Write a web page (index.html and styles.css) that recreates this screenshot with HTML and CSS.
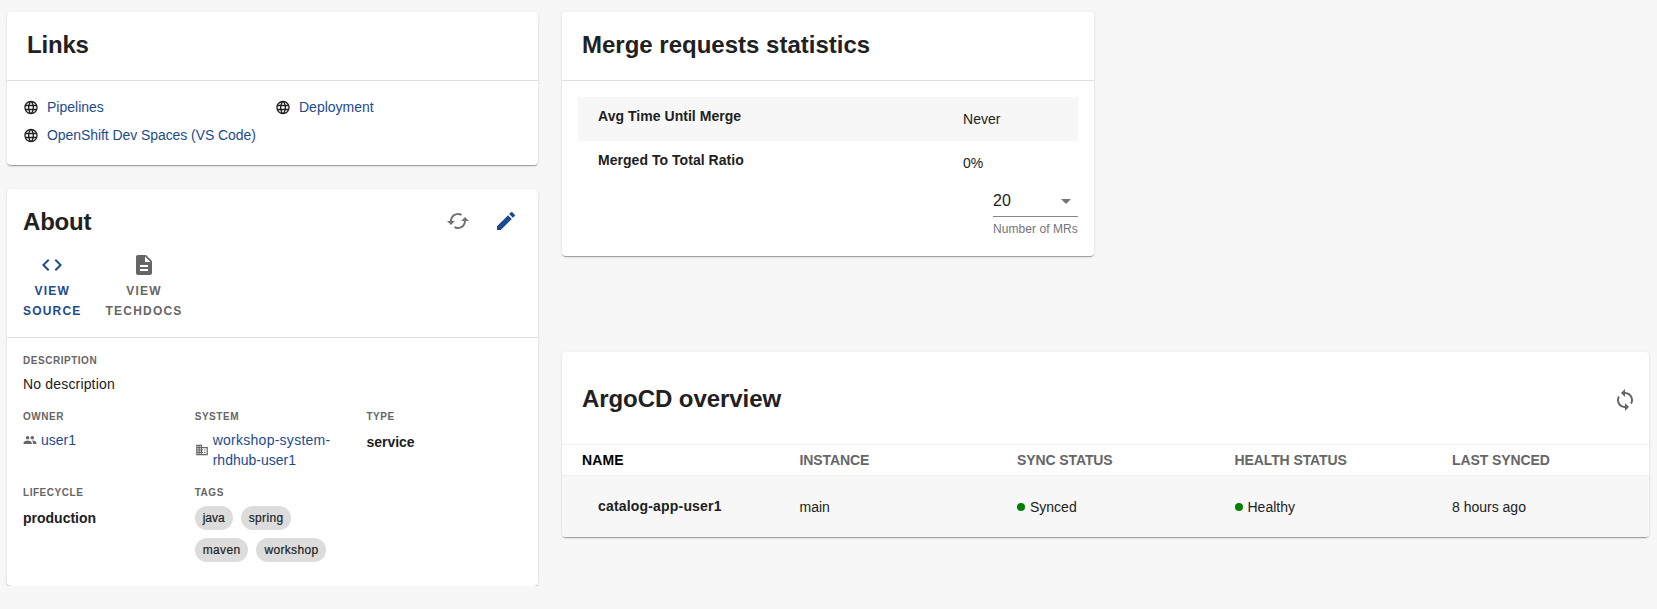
FILE: index.html
```html
<!DOCTYPE html>
<html lang="en">
<head>
<meta charset="utf-8">
<title>Catalog overview</title>
<link rel="stylesheet" href="styles.css">
</head>
<body>
<svg class="defs" aria-hidden="true">
  <symbol id="globe" viewBox="0 0 24 24"><path d="M11.99 2C6.47 2 2 6.48 2 12s4.47 10 9.99 10C17.52 22 22 17.52 22 12S17.52 2 11.99 2zm6.93 6h-2.95c-.32-1.25-.78-2.45-1.38-3.56 1.84.63 3.37 1.91 4.33 3.56zM12 4.04c.83 1.2 1.48 2.53 1.91 3.96h-3.82c.43-1.43 1.08-2.76 1.91-3.96zM4.26 14C4.1 13.36 4 12.69 4 12s.1-1.36.26-2h3.38c-.08.66-.14 1.32-.14 2s.06 1.34.14 2H4.26zm.82 2h2.95c.32 1.25.78 2.45 1.38 3.56-1.84-.63-3.37-1.9-4.33-3.56zm2.95-8H5.08c.96-1.66 2.49-2.93 4.33-3.56C8.81 5.55 8.35 6.75 8.03 8zM12 19.96c-.83-1.2-1.48-2.53-1.91-3.96h3.82c-.43 1.43-1.08 2.76-1.91 3.96zM14.34 14H9.66c-.09-.66-.16-1.32-.16-2s.07-1.35.16-2h4.68c.09.65.16 1.32.16 2s-.07 1.34-.16 2zm.25 5.56c.6-1.11 1.06-2.31 1.38-3.56h2.95c-.96 1.65-2.49 2.93-4.33 3.56zM16.36 14c.08-.66.14-1.32.14-2s-.06-1.34-.14-2h3.38c.16.64.26 1.31.26 2s-.1 1.36-.26 2h-3.38z"/></symbol>
</svg>
<main class="page">
  <div class="column-left">
    <section class="card links">
      <header class="card-head"><h2 class="snug">Links</h2></header>
      <div class="link-grid">
        <a class="link"><svg class="globe"><use href="#globe"/></svg>Pipelines</a>
        <a class="link"><svg class="globe"><use href="#globe"/></svg>Deployment</a>
        <a class="link long"><svg class="globe"><use href="#globe"/></svg>OpenShift Dev Spaces (VS Code)</a>
      </div>
    </section>

    <section class="card about">
      <header class="about-head">
        <div class="about-title">
          <h2 class="snug">About</h2>
          <div class="about-icons">
            <svg class="icon muted" viewBox="0 0 24 24"><path d="M19 8l-4 4h3c0 3.31-2.69 6-6 6-1.01 0-1.97-.25-2.8-.7l-1.46 1.46C8.97 19.54 10.43 20 12 20c4.42 0 8-3.58 8-8h3l-4-4zM6 12c0-3.31 2.69-6 6-6 1.01 0 1.97.25 2.8.7l1.46-1.46C15.03 4.46 13.57 4 12 4c-4.42 0-8 3.58-8 8H1l4 4 4-4H6z"/></svg>
            <svg class="icon blue" viewBox="0 0 24 24"><path d="M3 17.25V21h3.75L17.81 9.94l-3.75-3.75L3 17.25zM20.71 7.04c.39-.39.39-1.02 0-1.41l-2.34-2.34a.9959.9959 0 0 0-1.41 0l-1.83 1.83 3.75 3.75 1.83-1.83z"/></svg>
          </div>
        </div>
        <nav class="actions">
          <a class="action blue"><svg class="icon" viewBox="0 0 24 24"><path d="M9.4 16.6L4.8 12l4.6-4.6L8 6l-6 6 6 6 1.4-1.4zm5.2 0l4.6-4.6-4.6-4.6L16 6l6 6-6 6-1.4-1.4z"/></svg><span>VIEW<br>SOURCE</span></a>
          <a class="action gray"><svg class="icon" viewBox="0 0 24 24"><path d="M14 2H6c-1.1 0-1.99.9-1.99 2L4 20c0 1.1.89 2 1.99 2H18c1.1 0 2-.9 2-2V8l-6-6zm2 16H8v-2h8v2zm0-4H8v-2h8v2zm-3-5V3.5L18.5 9H13z"/></svg><span>VIEW<br>TECHDOCS</span></a>
        </nav>
      </header>
      <div class="fields">
        <div class="field wide"><h3>DESCRIPTION</h3><p class="loose">No description</p></div>
        <div class="field"><h3>OWNER</h3>
          <a class="entity"><svg viewBox="0 0 24 24"><path d="M16 11c1.66 0 2.99-1.34 2.99-3S17.66 5 16 5c-1.66 0-3 1.34-3 3s1.34 3 3 3zm-8 0c1.66 0 2.99-1.34 2.99-3S9.66 5 8 5C6.34 5 5 6.34 5 8s1.34 3 3 3zm0 2c-2.33 0-7 1.17-7 3.5V19h14v-2.5c0-2.33-4.67-3.5-7-3.5zm8 0c-.29 0-.62.02-.97.05 1.16.84 1.97 1.97 1.97 3.45V19h6v-2.5c0-2.33-4.67-3.5-7-3.5z"/></svg><span>user1</span></a></div>
        <div class="field"><h3>SYSTEM</h3>
          <a class="entity"><svg viewBox="0 0 24 24"><path d="M12 7V3H2v18h20V7H12zM6 19H4v-2h2v2zm0-4H4v-2h2v2zm0-4H4V9h2v2zm0-4H4V5h2v2zm4 12H8v-2h2v2zm0-4H8v-2h2v2zm0-4H8V9h2v2zm0-4H8V5h2v2zm10 12h-8v-2h2v-2h-2v-2h2v-2h-2V9h8v10zm-2-8h-2v2h2v-2zm0 4h-2v2h2v-2z"/></svg><span><span class="looser">workshop-system-</span><br>rhdhub-user1</span></a></div>
        <div class="field"><h3>TYPE</h3><p class="strong">service</p></div>
        <div class="field"><h3>LIFECYCLE</h3><p class="strong">production</p></div>
        <div class="field"><h3>TAGS</h3>
          <div class="chips"><span class="chip tight">java</span><span class="chip">spring</span><span class="chip">maven</span><span class="chip">workshop</span></div></div>
      </div>
    </section>
  </div>

  <div class="column-right">
    <section class="card merge">
      <header class="card-head"><h2>Merge requests statistics</h2></header>
      <div class="merge-body">
        <div class="stat shaded"><b>Avg Time Until Merge</b><span>Never</span></div>
        <div class="stat"><b>Merged To Total Ratio</b><span>0%</span></div>
        <div class="picker">
          <div class="select"><span>20</span><svg class="icon" viewBox="0 0 24 24"><path d="M7 10l5 5 5-5z"/></svg></div>
          <div class="helper">Number of MRs</div>
        </div>
      </div>
    </section>

    <section class="card argo">
      <header class="argo-head"><h2>ArgoCD overview</h2>
        <svg class="icon gray" viewBox="0 0 24 24"><path d="M12 6V9l-4-4 4-4v3c4.42 0 8 3.58 8 8 0 1.57-.46 3.03-1.24 4.26L17.3 14.8c.45-.83.7-1.79.7-2.8 0-3.31-2.69-6-6-6zM12 18c-3.31 0-6-2.69-6-6 0-1.01.25-1.97.7-2.8L5.24 7.74C4.46 8.97 4 10.43 4 12c0 4.42 3.58 8 8 8v3l4-4-4-4v3z"/></svg>
      </header>
      <div class="row row-head"><span class="sorted">NAME</span><span>INSTANCE</span><span>SYNC STATUS</span><span>HEALTH STATUS</span><span>LAST SYNCED</span></div>
      <div class="row row-body"><b>catalog-app-user1</b><span>main</span><span><i class="dot"></i>Synced</span><span><i class="dot"></i>Healthy</span><span>8 hours ago</span></div>
    </section>
  </div>
</main>
</body>
</html>
```
FILE: styles.css
```css
* { box-sizing: border-box; }
body { margin: 0; background: #f7f7f7; color: #212121; font: 14px/20px "Liberation Sans", Arial, sans-serif; }
h2, h3, p { margin: 0; }
h2 { font-size: 24px; line-height: 28px; font-weight: 700; }
.snug { letter-spacing: -.2px; }
.loose { letter-spacing: .17px; }
.looser { letter-spacing: .26px; }
svg { display: block; fill: currentColor; flex: none; }
.defs { display: none; }
.icon { width: 24px; height: 24px; }
.blue { color: #1d4b8f; }
.gray { color: #666; }
.muted { color: #757575; }

.page { display: flex; align-items: flex-start; gap: 24px; padding: 12px 8px 0 7px; }
.column-left { width: 531px; display: flex; flex-direction: column; gap: 24px; }
.column-right { width: 1087px; display: flex; flex-direction: column; gap: 96px; }
.card { background: #fff; border-radius: 4px; overflow: hidden; box-shadow: 0 2px 1px -1px rgba(0,0,0,.2), 0 1px 1px 0 rgba(0,0,0,.14), 0 1px 3px 0 rgba(0,0,0,.12); }
.card-head { height: 69px; padding: 19px 20px 0; border-bottom: 1px solid #dedede; }

.links { height: 153px; }
.link-grid { display: grid; grid-template-columns: 252px 1fr; gap: 8px 0; padding: 16px 16px 0; }
.link { display: flex; align-items: center; gap: 8px; color: #1d4b8f; white-space: nowrap; }
.long { letter-spacing: -.07px; }
.globe { width: 16px; height: 17px; color: #212121; }

.about { height: 397px; }
.about-head { height: 149px; border-bottom: 1px solid #dedede; padding: 19px 16px 0; }
.about-title { display: flex; justify-content: space-between; height: 28px; }
.about-icons { display: flex; gap: 24px; padding: 1px 4px 0 0; }
.actions { display: flex; gap: 24px; padding-top: 17px; }
.action { display: flex; flex-direction: column; align-items: center; gap: 4px; font-size: 12px; font-weight: 700; letter-spacing: 1.2px; text-align: center; }
.fields { display: grid; grid-template-columns: 171.7px 171.7px 1fr; row-gap: 16px; padding: 15px 16px 0; }
.wide { grid-column: 1 / -1; }
.field h3 { font-size: 10px; line-height: 15px; height: 21px; letter-spacing: .53px; color: #666; }
.wide { margin-bottom: -1px; }
.field p { line-height: 20px; }
.field .strong { font-weight: 700; padding-top: 2px; }
.entity { display: flex; align-items: center; gap: 4px; color: #1d4b8f; margin-bottom: -1px; }
.entity svg { width: 14px; height: 14px; color: #666; }
.chips { display: flex; flex-wrap: wrap; gap: 8px; width: 150px; }
.chip { height: 24px; padding: 0 8px; border-radius: 12px; background: #dcdcdc; font-size: 12px; line-height: 24px; letter-spacing: .34px; -webkit-text-stroke: .2px currentColor; }
.tight { letter-spacing: 0; }

.merge { width: 532px; height: 244px; }
.merge-body { padding: 16px 16px 0; }
.stat { height: 44px; display: grid; grid-template-columns: 365px 1fr; padding: 9px 0 0 20px; letter-spacing: .04px; }
.stat span { padding-top: 3px; }
.shaded { background: #f7f7f7; }
.picker { width: 85px; margin-left: auto; }
.select { display: flex; justify-content: space-between; height: 32px; padding: 6px 0 0; font-size: 16px; border-bottom: 1px solid #868686; }
.select svg { color: #757575; margin-top: -2px; }
.helper { color: #757575; font-size: 12px; line-height: 16px; padding-top: 4px; white-space: nowrap; letter-spacing: .06px; }

.argo { height: 185px; }
.argo-head { display: flex; justify-content: space-between; height: 92px; padding: 33px 12px 0 20px; }
.argo-head svg { margin-top: 3px; }
.argo-head h2 { letter-spacing: -.07px; }
.row { display: grid; grid-template-columns: 217.5px 217.5px 217.5px 217.5px 1fr; padding-left: 20px; align-items: center; border-top: 1px solid #eee; }
.row-head { height: 31px; font-weight: 700; color: #666; letter-spacing: -.1px; }
.row-head .sorted { color: #000; letter-spacing: .1px; }
.row-body { height: 62px; background: #f7f7f7; }
.row-body b { padding-left: 16px; margin-top: -2px; letter-spacing: .18px; }
.dot { display: inline-block; width: 8px; height: 8px; border-radius: 50%; background: #008000; margin-right: 5px; vertical-align: 1px; }
```
